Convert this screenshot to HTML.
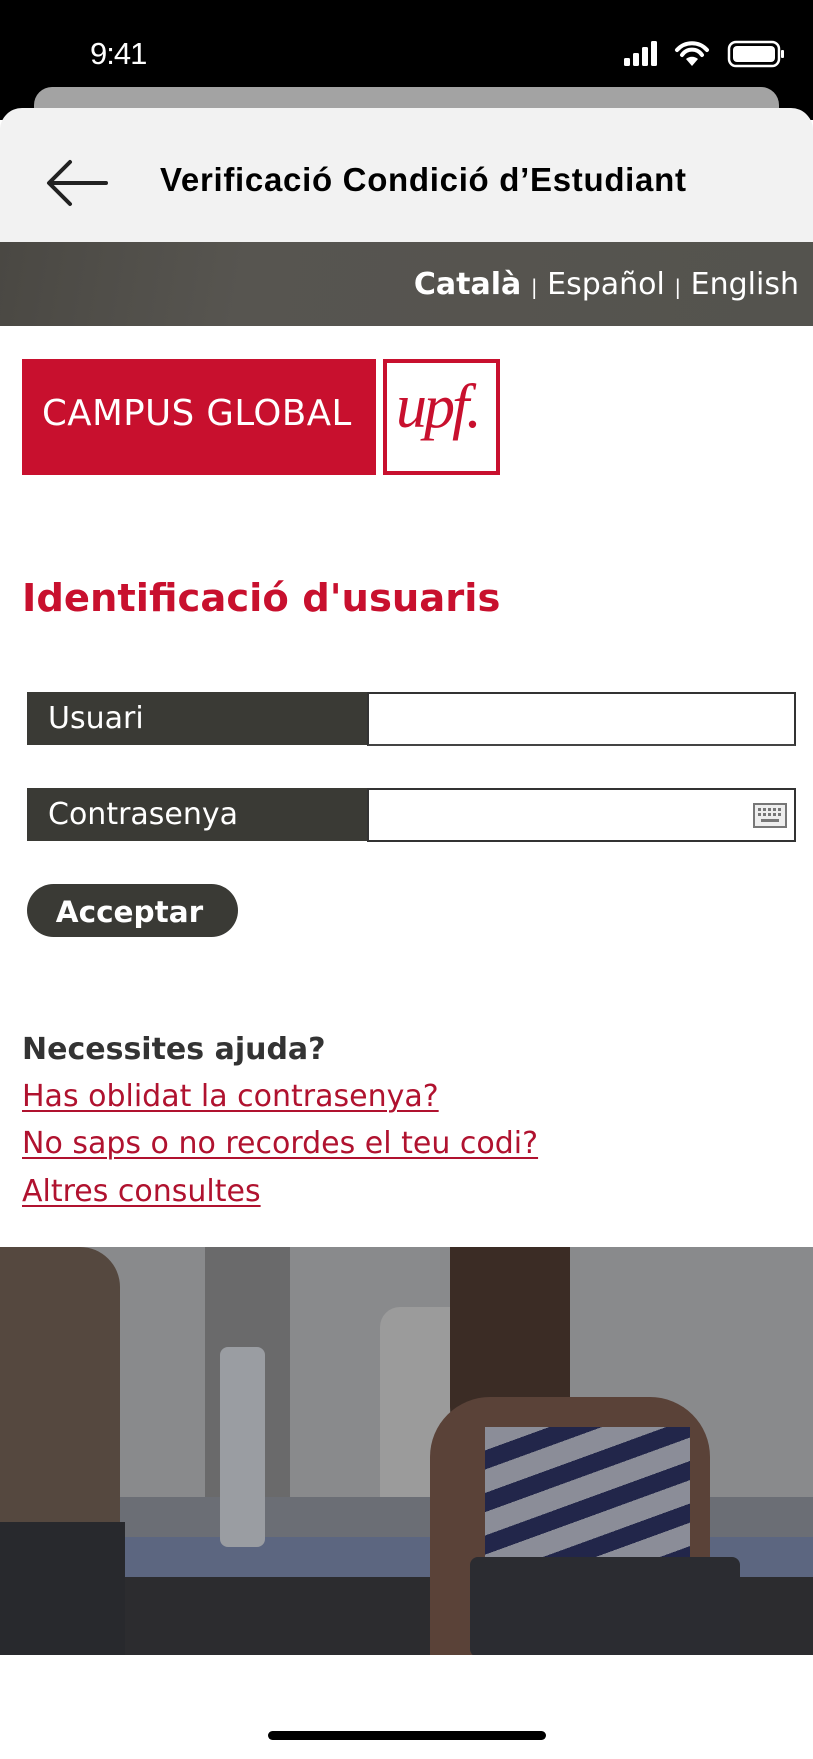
<!DOCTYPE html>
<html><head><meta charset="utf-8"><style>
*{margin:0;padding:0;box-sizing:border-box}
html,body{width:813px;height:1759px;overflow:hidden}
body{background:#fff;position:relative;font-family:"DejaVu Sans",Verdana,sans-serif}
.a{position:absolute}
.lk{color:#b0122f;text-decoration:underline;font-size:30px;left:22px;text-underline-offset:4px;text-decoration-thickness:2px;white-space:nowrap}
</style></head><body>
<div class="a" style="left:0;top:0;width:813px;height:120px;background:#000"></div>
<div class="a" style="left:90px;top:36px;color:#fff;font:31px 'Liberation Sans',sans-serif;letter-spacing:-1px">9:41</div>
<svg class="a" style="left:620px;top:40px" width="165" height="28" viewBox="0 0 165 28">
<rect x="4" y="18" width="6" height="8" rx="1.5" fill="#fff"/><rect x="13" y="13" width="6" height="13" rx="1.5" fill="#fff"/><rect x="22" y="7" width="6" height="19" rx="1.5" fill="#fff"/><rect x="31" y="1" width="6" height="25" rx="1.5" fill="#fff"/>
<path d="M57 10 a20 20 0 0 1 30 0 M62 15 a12 12 0 0 1 20 0" stroke="#fff" stroke-width="4" fill="none" stroke-linecap="round"/><path d="M66 19 l6 7 6-7 a9 9 0 0 0-12 0z" fill="#fff"/>
<rect x="109" y="2" width="50" height="24" rx="7" stroke="#fff" stroke-width="2.5" fill="none"/><rect x="113" y="6" width="42" height="16" rx="4" fill="#fff"/><rect x="161" y="10" width="3" height="8" rx="1" fill="#fff"/>
</svg>
<div class="a" style="left:34px;top:87px;width:745px;height:40px;background:#a3a3a3;border-radius:18px 18px 0 0"></div>
<div class="a" style="left:0;top:108px;width:813px;height:134px;background:#f2f2f2;border-radius:22px 22px 0 0"></div>
<svg class="a" style="left:46px;top:158px" width="64" height="50" viewBox="0 0 64 50"><path d="M60 25H4M24 4L3 25l21 21" stroke="#222" stroke-width="4" fill="none" stroke-linecap="round" stroke-linejoin="round"/></svg>
<div class="a" style="left:160px;top:161px;font:bold 33px 'Liberation Sans',sans-serif;color:#000;letter-spacing:0.7px;white-space:nowrap">Verificació Condició d’Estudiant</div>
<div class="a" style="left:0;top:242px;width:813px;height:84px;background:linear-gradient(100deg,#4a4843 0%,#575550 30%,#54534e 100%)"></div>
<div class="a" style="right:14px;top:267px;color:#fff;font-size:30px;white-space:nowrap"><b>Català</b> <span style="font-size:20px">|</span> Español <span style="font-size:20px">|</span> English</div>
<div class="a" style="left:22px;top:359px;width:354px;height:116px;background:#c8102e"></div>
<div class="a" style="left:42px;top:393px;color:#fff;font:35.5px 'DejaVu Sans',sans-serif;white-space:nowrap;letter-spacing:0.5px">CAMPUS GLOBAL</div>
<div class="a" style="left:383px;top:359px;width:117px;height:116px;border:4px solid #c8102e;background:#fff"></div>
<div class="a" style="left:396px;top:372px;color:#c8102e;font:italic 62px 'Liberation Serif',serif;letter-spacing:-3px">upf.</div>
<div class="a" style="left:22px;top:576px;color:#c8102e;font-weight:bold;font-size:38.5px;white-space:nowrap">Identificació d'usuaris</div>
<div class="a" style="left:27px;top:692px;width:342px;height:53px;background:#3a3a35;color:#fff;font-size:30px;padding:9px 0 0 21px">Usuari</div>
<div class="a" style="left:367px;top:692px;width:429px;height:54px;border:2px solid #333;border-bottom-color:#444"></div>
<div class="a" style="left:27px;top:788px;width:342px;height:53px;background:#3a3a35;color:#fff;font-size:30px;padding:9px 0 0 21px">Contrasenya</div>
<div class="a" style="left:367px;top:788px;width:429px;height:54px;border:2px solid #333"></div>
<svg class="a" style="left:753px;top:803px" width="34" height="25" viewBox="0 0 34 25"><rect x="1" y="1" width="32" height="23" fill="#eee" stroke="#777" stroke-width="2"/><g fill="#777"><rect x="5" y="5" width="3" height="3"/><rect x="10" y="5" width="3" height="3"/><rect x="15" y="5" width="3" height="3"/><rect x="20" y="5" width="3" height="3"/><rect x="25" y="5" width="3" height="3"/><rect x="5" y="10" width="3" height="3"/><rect x="10" y="10" width="3" height="3"/><rect x="15" y="10" width="3" height="3"/><rect x="20" y="10" width="3" height="3"/><rect x="25" y="10" width="3" height="3"/><rect x="8" y="16" width="18" height="3"/></g></svg>
<div class="a" style="left:27px;top:884px;width:211px;height:53px;border-radius:27px;background:#3a3a35;color:#fff;font-weight:bold;font-size:29.5px;text-align:center;line-height:56px;padding-right:6px">Acceptar</div>
<div class="a" style="left:22px;top:1032px;color:#333;font-weight:bold;font-size:30px">Necessites ajuda?</div>
<div class="a lk" style="top:1079px">Has oblidat la contrasenya?</div>
<div class="a lk" style="top:1126px">No saps o no recordes el teu codi?</div>
<div class="a lk" style="top:1174px">Altres consultes</div>
<div class="a" style="left:0;top:1247px;width:813px;height:408px;background:#7c7d80;overflow:hidden">
 <div class="a" style="left:0;top:0;width:813px;height:250px;background:#898a8c"></div>
 <div class="a" style="left:205px;top:0;width:85px;height:260px;background:#6a6a6b"></div>
 <div class="a" style="left:380px;top:60px;width:140px;height:250px;background:#9b9b9b;border-radius:20px"></div>
 <div class="a" style="left:0;top:250px;width:813px;height:40px;background:#6b6e75"></div>
 <div class="a" style="left:0;top:290px;width:813px;height:40px;background:#5c6680"></div>
 <div class="a" style="left:0;top:330px;width:813px;height:80px;background:#2c2c2f"></div>
 <div class="a" style="left:0;top:0;width:120px;height:280px;background:#55483f;border-radius:0 40px 0 0"></div>
 <div class="a" style="left:0;top:275px;width:125px;height:140px;background:#28292d"></div>
 <div class="a" style="left:450px;top:0;width:120px;height:210px;background:#3b2c25;border-radius:0 0 50px 50px"></div>
 <div class="a" style="left:430px;top:150px;width:280px;height:270px;background:#5a4238;border-radius:60px 60px 0 0"></div>
 <div class="a" style="left:485px;top:180px;width:205px;height:150px;background:repeating-linear-gradient(160deg,#8b8d98 0 22px,#22264a 22px 40px)"></div>
 <div class="a" style="left:470px;top:310px;width:270px;height:100px;background:#2b2c31;border-radius:8px"></div>
 <div class="a" style="left:220px;top:100px;width:45px;height:200px;background:#9a9da2;border-radius:8px"></div>
</div>
<div class="a" style="left:268px;top:1731px;width:278px;height:9px;border-radius:5px;background:#000"></div>
</body></html>
